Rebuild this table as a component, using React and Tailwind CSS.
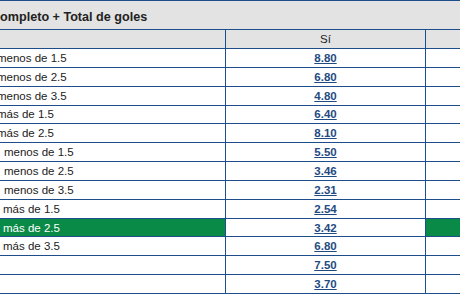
import React from 'react';

const rows = [
  { label: 'menos de 1.5', shift: 'ml-[-3px]', odds: '8.80' },
  { label: 'menos de 2.5', shift: 'ml-[-3px]', odds: '6.80' },
  { label: 'menos de 3.5', shift: 'ml-[-3px]', odds: '4.80' },
  { label: 'más de 1.5', shift: 'ml-[-3px]', odds: '6.40' },
  { label: 'más de 2.5', shift: 'ml-[-3px]', odds: '8.10' },
  { label: 'menos de 1.5', shift: 'ml-[4px]', odds: '5.50' },
  { label: 'menos de 2.5', shift: 'ml-[4px]', odds: '3.46' },
  { label: 'menos de 3.5', shift: 'ml-[4px]', odds: '2.31' },
  { label: 'más de 1.5', shift: 'ml-[3px]', odds: '2.54' },
  { label: 'más de 2.5', shift: 'ml-[3px]', odds: '3.42', active: true },
  { label: 'más de 3.5', shift: 'ml-[3px]', odds: '6.80' },
  { label: '', shift: '', odds: '7.50' },
  { label: '', shift: '', odds: '3.70' },
];

const Row = ({ label, shift, odds, active }) => (
  <div className="flex h-[18.85px] border-b border-[#1e4d8c]">
    <div
      className={`w-[226px] shrink-0 border-r border-[#1e4d8c] flex items-center overflow-hidden whitespace-nowrap ${
        active ? 'bg-[#0a8a47] text-white' : 'text-[#222]'
      }`}
    >
      <span className={shift}>{label}</span>
    </div>
    <div className="w-[200px] shrink-0 border-r border-[#1e4d8c] flex items-center justify-center">
      <a href="#" className="font-bold underline text-[#1f4b82]">
        {odds}
      </a>
    </div>
    <div className={`flex-1 ${active ? 'bg-[#0a8a47]' : ''}`} />
  </div>
);

const App = () => (
  <div
    className="w-[460px] h-[295px] overflow-hidden bg-white text-[11.5px] leading-[14px]"
    style={{ fontFamily: '"Liberation Sans", Arial, sans-serif' }}
  >
    <div className="border-t border-[#1e4d8c]">
      <div className="h-[29px] bg-[#e3e3e3] border-b border-[#1e4d8c] pt-[8px] overflow-hidden whitespace-nowrap">
        <span className="ml-[-9px] font-bold text-[12.6px] leading-[16px] text-[#222]">
          Completo + Total de goles
        </span>
      </div>
      <div className="flex h-[19px] bg-[#e3e3e3] border-b border-[#1e4d8c]">
        <div className="w-[226px] shrink-0 border-r border-[#1e4d8c]" />
        <div className="w-[200px] shrink-0 border-r border-[#1e4d8c] flex items-center justify-center text-[#222]">
          Sí
        </div>
        <div className="flex-1" />
      </div>
      {rows.map((r, i) => (
        <Row key={i} {...r} />
      ))}
    </div>
  </div>
);

export default App;
